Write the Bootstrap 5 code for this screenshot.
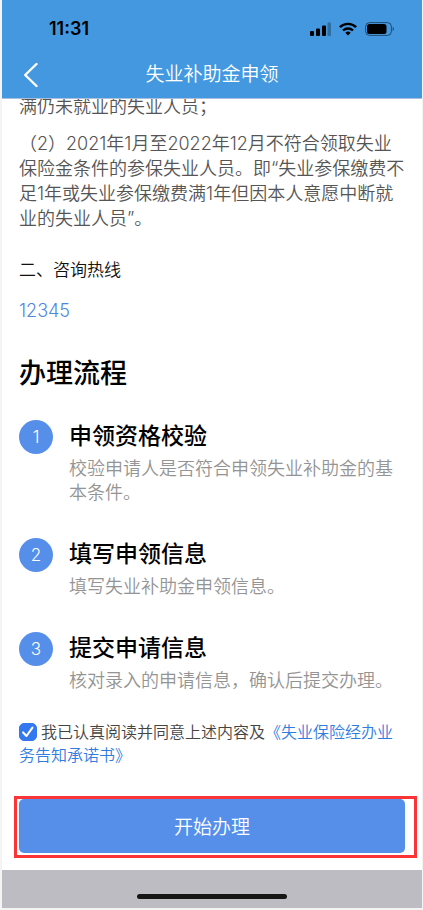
<!DOCTYPE html>
<html lang="zh-CN">
<head>
<meta charset="utf-8">
<meta name="viewport" content="width=device-width, initial-scale=1">
<title>失业补助金申领</title>
<link href="https://cdn.jsdelivr.net/npm/bootstrap@5.3.0/dist/css/bootstrap.min.css" rel="stylesheet">
<style>
  body { background: #f4f4f4; font-family: Inter, "Noto Sans CJK SC", sans-serif; font-weight: 350; color: #000; padding: 0 1px 2px 2px; }
  .screen { background: #fff; min-height: calc(100vh - 2px); }
  .app-head { background: #4398e0; z-index: 2; border-bottom: 1px solid #a9bfdc; padding-bottom: 5px; }
  .status { height: 57px; padding: 0 27px 0 47px; }
  .clock { font-size: 18px; line-height: 24px; font-weight: 600; }
  .titlebar { height: 36px; }
  .side { width: 60px; height: 36px; }
  .back-icon { margin-left: 22px; }
  .titlebar h1 { font-size: 19px; line-height: 28px; font-weight: 350; }
  .scroll-body { padding: 0 17px; margin-top: -5px; }
  .prose { font-size: 18px; line-height: 25px; color: #555; margin-bottom: 12px; }
  .sub { font-size: 17px; line-height: 24px; font-weight: 350; color: #111; margin: 27px 0 0; }
  .phone { font-size: 18px; line-height: 24px; color: #4f87e0; margin-top: 17px; }
  .flow-title { font-size: 27px; line-height: 36px; font-weight: 500; margin: 33px 0 28px; }
  .steps { gap: 33px; }
  .num { width: 34px; height: 34px; font-size: 17px; background: #568fea; padding-top: 2px; }
  .step h3 { font-size: 23px; line-height: 32px; font-weight: 500; margin-bottom: 5px; }
  .step p { font-size: 18px; line-height: 24px; color: #949494; }
  .agree { font-size: 16px; line-height: 23px; color: #444; margin-top: 28px; }
  .agree .form-check-input { width: 18px; height: 18px; margin: 0 4px 0 0; vertical-align: -3px; border-radius: 5px; }
  .agree .form-check-input:checked { background-color: #3478f0; border-color: #3478f0; background-image: url("data:image/svg+xml,%3Csvg xmlns='http://www.w3.org/2000/svg' viewBox='0 0 18 18'%3E%3Cpath d='M3.500 9.500 7.300 13.500 14 4' fill='none' stroke='%23fff' stroke-width='2.300' stroke-linecap='round' stroke-linejoin='round'/%3E%3C/svg%3E"); }
  .agree a { color: #2f7de0; }
  .frame { border: 3px solid #fb3438; margin: 29px 5px 12px 12px; padding: 0 9px 2px 2px; }
  .start { height: 54px; font-size: 19px; font-weight: 350; background: #568fea; border-radius: 5px; }
  .start:hover { background: #477fda; }
  .home { background: #bdbcc2; height: 38px; padding-bottom: 9px; }
  .bar { width: 150px; height: 5px; background: #161616; }
</style>
</head>
<body>
<div class="screen d-flex flex-column">
  <header class="app-head position-relative">
    <div class="status d-flex align-items-center justify-content-between">
      <span class="clock">11:31</span>
      <div class="d-flex align-items-center gap-2">
        <svg width="21" height="14" viewBox="0 0 21 14" aria-hidden="true"><rect x="0" y="9" width="4" height="5" rx="1"/><rect x="6" y="6.500" width="4" height="7.500" rx="1"/><rect x="12" y="3.500" width="4" height="10.500" rx="1"/><rect x="17.500" y=".5" width="3.500" height="13.500" rx="1" opacity=".28"/></svg>
        <svg width="18" height="14" viewBox="0 0 18 14" fill="none" stroke="#000" stroke-width="2.400" aria-hidden="true"><path d="M.9 5.200a11.600 11.600 0 0 1 16.200 0M4 8.500a7.200 7.200 0 0 1 10 0"/><path d="M9 13.500 6.300 10.800a4 4 0 0 1 5.400 0z" fill="#000" stroke="none"/></svg>
        <svg width="30" height="14" viewBox="0 0 30 14" aria-hidden="true"><rect x=".6" y=".6" width="25.800" height="12.800" rx="4" fill="none" stroke="#000" stroke-opacity=".5"/><rect x="2" y="2" width="19.500" height="10" rx="2.500"/><path d="M27.700 4.800v4.400c1.600-.5 1.600-3.900 0-4.400z" opacity=".5"/></svg>
      </div>
    </div>
    <div class="titlebar d-flex align-items-center justify-content-between">
      <button type="button" class="side btn p-0 border-0 text-start" aria-label="返回"><svg class="back-icon d-block" width="14" height="26" viewBox="2 0 14 26" fill="none" stroke="#fff" stroke-width="2.400" stroke-linecap="round" stroke-linejoin="round"><path d="M14.500 2 3.200 13l11.300 11"/></svg></button>
      <h1 class="m-0 text-white">失业补助金申领</h1>
      <span class="side"></span>
    </div>
  </header>
  <main class="flex-grow-1">
    <div class="scroll-body">
      <p class="prose">满仍未就业的失业人员；</p>
      <p class="prose">（2）2021年1月至2022年12月不符合领取失业保险金条件的参保失业人员。即“失业参保缴费不足1年或失业参保缴费满1年但因本人意愿中断就业的失业人员”。</p>
      <h2 class="sub">二、咨询热线</h2>
      <a class="phone d-block text-decoration-none" href="tel:12345">12345</a>
      <h2 class="flow-title">办理流程</h2>
      <ol class="steps list-unstyled d-flex flex-column m-0">
        <li class="step d-flex gap-3">
          <span class="num rounded-circle text-white d-flex flex-shrink-0 align-items-center justify-content-center">1</span>
          <div><h3>申领资格校验</h3><p class="m-0">校验申请人是否符合申领失业补助金的基本条件。</p></div>
        </li>
        <li class="step d-flex gap-3">
          <span class="num rounded-circle text-white d-flex flex-shrink-0 align-items-center justify-content-center">2</span>
          <div><h3>填写申领信息</h3><p class="m-0">填写失业补助金申领信息。</p></div>
        </li>
        <li class="step d-flex gap-3">
          <span class="num rounded-circle text-white d-flex flex-shrink-0 align-items-center justify-content-center">3</span>
          <div><h3>提交申请信息</h3><p class="m-0">核对录入的申请信息，确认后提交办理。</p></div>
        </li>
      </ol>
      <div class="agree"><input class="form-check-input" type="checkbox" id="agree" checked><label class="d-inline" for="agree">我已认真阅读并同意上述内容及<a class="text-decoration-none" href="#">《失业保险经办业务告知承诺书》</a></label></div>
    </div>
    <div class="frame"><button type="button" class="start btn text-white w-100 border-0 p-0 pt-1">开始办理</button></div>
  </main>
  <footer class="home d-flex align-items-end justify-content-center"><div class="bar rounded-pill"></div></footer>
</div>
<script src="https://cdn.jsdelivr.net/npm/bootstrap@5.3.0/dist/js/bootstrap.bundle.min.js"></script>
</body>
</html>
